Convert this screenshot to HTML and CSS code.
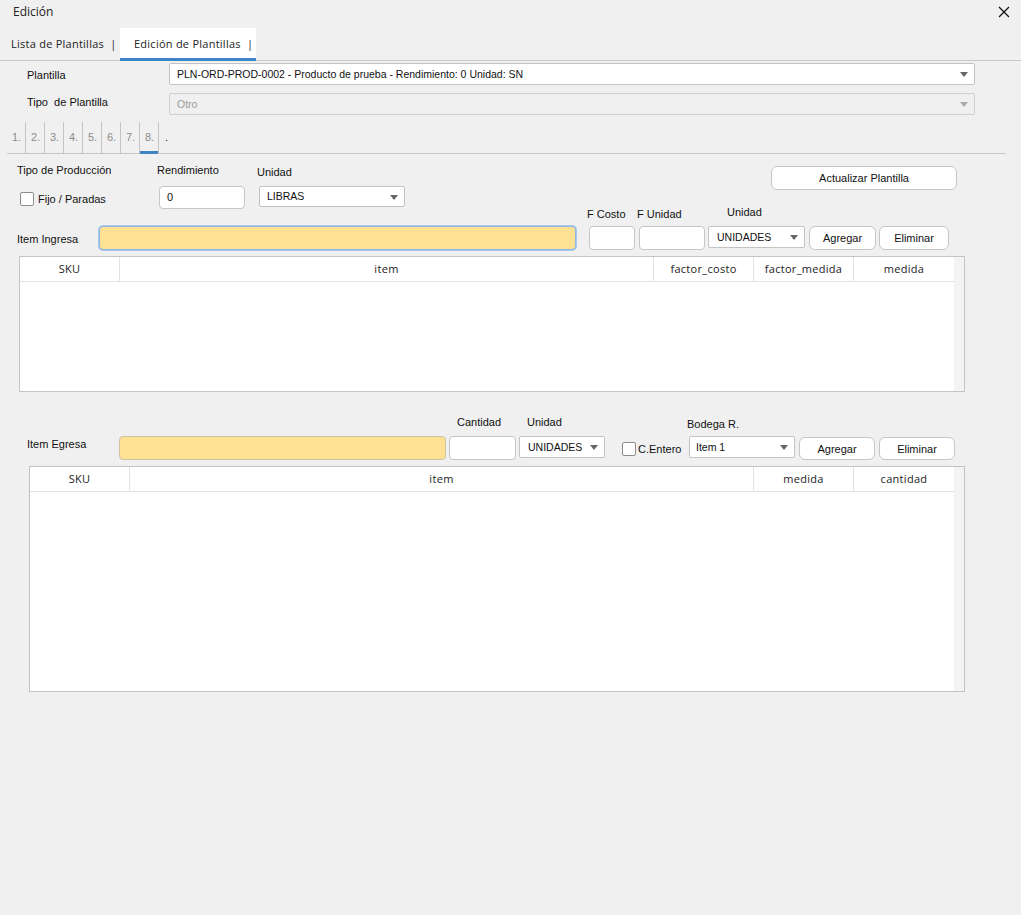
FILE: index.html
```html
<!DOCTYPE html>
<html lang="es">
<head>
  <meta charset="UTF-8" />
  <title>Edición</title>
  <link rel="stylesheet" href="styles.css">
</head>
<body>
  <div class="titlebar">
    <span>Edición</span>
    <svg class="close" width="12" height="12" viewBox="0 0 12 12">
      <path d="M1 1 L11 11 M11 1 L1 11" stroke="#111" stroke-width="1.3" fill="none"/>
    </svg>
  </div>

  <div class="tabs">
    <div class="tab tab-list">Lista de Plantillas&nbsp;&nbsp;|</div>
    <div class="tab tab-edit">Edición de Plantillas&nbsp;&nbsp;|</div>
  </div>

  <div class="form-top">
    <div class="form-row">
      <label>Plantilla</label>
      <div class="select select-wide">PLN-ORD-PROD-0002 - Producto de prueba - Rendimiento: 0 Unidad: SN</div>
    </div>
    <div class="form-row">
      <label class="lbl-up">Tipo&nbsp; de Plantilla</label>
      <div class="select select-wide disabled">Otro</div>
    </div>
  </div>

  <div class="steps">
    <div class="step">1.</div>
    <div class="step">2.</div>
    <div class="step">3.</div>
    <div class="step">4.</div>
    <div class="step">5.</div>
    <div class="step">6.</div>
    <div class="step">7.</div>
    <div class="step active">8.</div>
    <div class="step last">.</div>
  </div>

  <!-- produccion -->
  <div class="prod">
    <div class="col-a">
      <div class="lbl">Tipo de Producción</div>
      <div class="check-row">
        <span class="checkbox"></span>
        <span>Fijo / Paradas</span>
      </div>
    </div>
    <div class="col-b">
      <div class="lbl">Rendimiento</div>
      <div class="input input-rend">0</div>
    </div>
    <div class="col-c">
      <div class="lbl">Unidad</div>
      <div class="select select-libras">LIBRAS</div>
    </div>
    <div class="btn btn-update">Actualizar Plantilla</div>
  </div>

  <!-- item ingresa -->
  <div class="item-row row-in">
    <div class="row-label">Item Ingresa</div>
    <div class="input yellow focused in-item"></div>
    <div class="field f-costo">
      <div class="lbl-sm">F Costo</div>
      <div class="input"></div>
    </div>
    <div class="field f-unidad">
      <div class="lbl-sm">F Unidad</div>
      <div class="input"></div>
    </div>
    <div class="field f-medida">
      <div class="lbl-sm">Unidad</div>
      <div class="select">UNIDADES</div>
    </div>
    <div class="btn btn-add">Agregar</div>
    <div class="btn btn-del">Eliminar</div>
  </div>

  <div class="grid grid-in">
    <div class="grid-body">
      <div class="grid-head">
        <div class="cell c-fix">SKU</div>
        <div class="cell c-grow">item</div>
        <div class="cell c-fix">factor_costo</div>
        <div class="cell c-fix">factor_medida</div>
        <div class="cell c-fix c-last">medida</div>
      </div>
    </div>
    <div class="grid-scroll"></div>
  </div>

  <!-- item egresa -->
  <div class="item-row row-out">
    <div class="row-label">Item Egresa</div>
    <div class="input yellow out-item"></div>
    <div class="field f-cant">
      <div class="lbl-sm">Cantidad</div>
      <div class="input"></div>
    </div>
    <div class="field f-uni">
      <div class="lbl-sm">Unidad</div>
      <div class="select">UNIDADES</div>
    </div>
    <div class="check-entero">
      <span class="checkbox"></span>
      <span>C.Entero</span>
    </div>
    <div class="field f-bodega">
      <div class="lbl-sm">Bodega R.</div>
      <div class="select">Item 1</div>
    </div>
    <div class="btn btn-add">Agregar</div>
    <div class="btn btn-del">Eliminar</div>
  </div>

  <div class="grid grid-out">
    <div class="grid-body">
      <div class="grid-head">
        <div class="cell c-fix">SKU</div>
        <div class="cell c-grow">item</div>
        <div class="cell c-fix">medida</div>
        <div class="cell c-fix c-last">cantidad</div>
      </div>
    </div>
    <div class="grid-scroll"></div>
  </div>
</body>
</html>
```

FILE: styles.css
```css
* {
  margin: 0;
  padding: 0;
  box-sizing: border-box;
}

body {
  width: 1021px;
  height: 915px;
  overflow: hidden;
  background: #f0f0f0;
  font-family: "Liberation Sans", Arial, sans-serif;
  font-size: 11px;
  color: #111;
}

/* title + tabs */
.titlebar {
  height: 28px;
  display: flex;
  justify-content: space-between;
  align-items: flex-start;
  padding: 5px 11px 0 13px;
  font-family: "Open Sans", sans-serif;
  font-size: 12px;
  line-height: 14px;
  color: #222;
}

.close {
  margin-top: 1px;
}

.tabs {
  display: flex;
  align-items: flex-start;
  height: 33px;
  border-bottom: 1px solid #c9c9c9;
}

.tab {
  height: 32px;
  line-height: 32px;
  font-family: "Open Sans", sans-serif;
  font-size: 11px;
  letter-spacing: 0.25px;
  color: #222;
  white-space: nowrap;
}

.tab-list {
  width: 120px;
  padding-left: 11px;
}

.tab-edit {
  width: 136px;
  height: 33px;
  padding-left: 14px;
  background: #fff;
  border-bottom: 3px solid #3d83c6;
}

/* plantilla rows */
.form-top {
  padding: 2px 46px 0 27px;
}

.form-row {
  display: flex;
  align-items: center;
  height: 22px;
  margin-bottom: 8px;
}

.form-row:last-child {
  margin-bottom: 0;
}

.form-row label {
  width: 142px;
  padding-top: 2px;
}

.form-row .lbl-up {
  padding-top: 0;
  margin-top: -4px;
}

.select {
  position: relative;
  height: 21px;
  line-height: 19px;
  padding-left: 7px;
  background: #fff;
  border: 1px solid #c3c3c3;
  border-radius: 2px;
  font-size: 10.5px;
  color: #111;
  white-space: nowrap;
}

.select::after {
  content: "";
  position: absolute;
  right: 6px;
  top: 8px;
  border-left: 4.5px solid transparent;
  border-right: 4.5px solid transparent;
  border-top: 5px solid #666;
}

.select-wide {
  flex: 1;
  height: 22px;
  line-height: 20px;
}

.select.disabled {
  background: #f0f0f0;
  border-color: #cfcfcf;
  color: #9a9a9a;
}

.select.disabled::after {
  border-top-color: #aaa;
}

/* steps */
.steps {
  display: flex;
  align-items: flex-start;
  height: 32px;
  margin: 7px 15px 0 7px;
  border-bottom: 1px solid #c8c8c8;
}

.step {
  width: 19px;
  height: 32px;
  line-height: 31px;
  padding-left: 5px;
  border-right: 1px solid #c4c4c4;
  font-size: 11px;
  color: #8c8c8c;
}

.step.active {
  box-shadow: inset 0 -3px 0 #3d83c6;
}

.step.last {
  border-right: none;
  padding-left: 6px;
  color: #111;
}

/* produccion */
.prod {
  display: flex;
  align-items: flex-start;
  padding: 0 64px 0 17px;
}

.lbl {
  line-height: 12px;
}

.col-a {
  width: 140px;
  padding-top: 10px;
}

.check-row {
  display: flex;
  align-items: center;
  gap: 4px;
  margin: 16px 0 0 3px;
}

.checkbox {
  width: 14px;
  height: 14px;
  background: #fff;
  border: 1px solid #8c8c8c;
  border-radius: 2px;
}

.col-b {
  width: 100px;
  padding-top: 10px;
}

.input {
  height: 24px;
  line-height: 22px;
  padding-left: 7px;
  background: #fff;
  border: 1px solid #c6c6c6;
  border-radius: 4px;
  font-size: 11px;
}

.input-rend {
  width: 86px;
  height: 23px;
  line-height: 21px;
  margin: 10px 0 0 2px;
}

.col-c {
  width: 150px;
  padding-top: 12px;
}

.select-libras {
  width: 146px;
  margin: 8px 0 0 2px;
}

.btn {
  height: 24px;
  line-height: 22px;
  text-align: center;
  background: #fff;
  border: 1px solid #c6c6c6;
  border-radius: 6px;
  font-size: 11px;
  color: #111;
}

.btn-update {
  width: 186px;
  margin: 12px 0 0 auto;
}

/* item rows */
.item-row {
  display: flex;
  align-items: flex-start;
}

.row-label {
  line-height: 12px;
}

.lbl-sm {
  line-height: 10px;
  white-space: nowrap;
}

.yellow {
  background: #fee192;
  border-color: #cfc3a0;
}

.yellow.focused {
  border-color: #8db6e6;
  box-shadow: 0 0 0 1px #a9c8ec;
}

.field .select {
  height: 22px;
  line-height: 20px;
  padding-left: 8px;
}

.row-in .row-label {
  width: 82px;
  margin: 24px 0 0 17px;
}

.in-item {
  width: 477px;
  margin-top: 17px;
}

.row-in .lbl-sm {
  margin: 0 0 7px -2px;
}

.f-costo {
  width: 46px;
  margin-left: 13px;
}

.f-unidad {
  width: 66px;
  margin-left: 4px;
}

.row-in .f-medida .lbl-sm {
  margin: -2px 0 9px 19px;
}

.f-medida {
  width: 97px;
  margin-left: 3px;
}

.row-in .btn-add {
  width: 67px;
  margin: 17px 0 0 4px;
}

.row-in .btn-del {
  width: 70px;
  margin: 17px 0 0 3px;
}

/* grids */
.grid {
  display: flex;
  background: #fff;
  border: 1px solid #c3c3c3;
}

.grid-in {
  width: 946px;
  height: 136px;
  margin: 6px 0 0 19px;
}

.grid-out {
  width: 936px;
  height: 226px;
  margin: 6px 0 0 29px;
}

.grid-body {
  flex: 1;
}

.grid-scroll {
  width: 10px;
  background: #f3f3f3;
}

.grid-head {
  display: flex;
  height: 25px;
  border-bottom: 1px solid #e2e2e2;
  font-family: "Open Sans", sans-serif;
  font-size: 11px;
  letter-spacing: 0.3px;
  color: #222;
}

.cell {
  line-height: 24px;
  text-align: center;
  border-right: 1px solid #e2e2e2;
}

.c-fix {
  width: 100px;
}

.c-grow {
  flex: 1;
}

.c-last {
  border-right: none;
}

/* egresa */
.row-out {
  padding-top: 25px;
}

.row-out .row-label {
  width: 92px;
  margin: 21px 0 0 27px;
}

.out-item {
  width: 327px;
  margin-top: 19px;
}

.row-out .lbl-sm {
  margin-bottom: 9px;
}

.f-cant {
  width: 67px;
  margin-left: 3px;
}

.f-cant .lbl-sm,
.f-uni .lbl-sm {
  margin-left: 8px;
}

.f-uni {
  width: 86px;
  margin-left: 3px;
}

.check-entero {
  display: flex;
  align-items: center;
  gap: 2px;
  width: 67px;
  margin: 25px 0 0 17px;
}

.f-bodega {
  width: 106px;
}

.f-bodega .select {
  padding-left: 6px;
}

.row-out .f-bodega .lbl-sm {
  margin: 2px 0 7px -2px;
}

.row-out .btn-add {
  width: 76px;
  height: 23px;
  margin: 20px 0 0 4px;
}

.row-out .btn-del {
  width: 76px;
  height: 23px;
  margin: 20px 0 0 4px;
}
```
